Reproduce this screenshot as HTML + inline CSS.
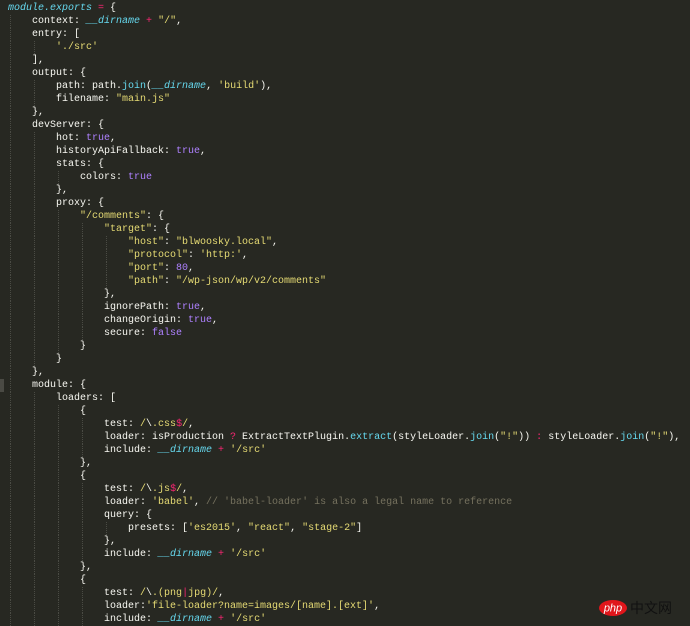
<!DOCTYPE html>
<html><head><meta charset="utf-8"><style>
html,body{margin:0;padding:0;background:#272822;width:690px;height:621px;overflow:hidden}
#c{position:absolute;left:8px;top:2px;font-family:"Liberation Mono",monospace;font-size:10px;line-height:13px;color:#f8f8f2}
.l{height:13px;white-space:pre}
.g{display:inline-block;width:24px;height:13px;vertical-align:top;background:repeating-linear-gradient(#4a4b44 0 1px,transparent 1px 2px) no-repeat 2px 0/1px 100%}
.s{color:#e6db74}.c{color:#66d9ef}.i{color:#66d9ef;font-style:italic}.p{color:#f92672}.n{color:#ae81ff}.m{color:#75715e}
#hl{position:absolute;left:0;top:379px;width:4px;height:13px;background:#4a4a44}
#logo{position:absolute;left:599px;top:598px}
</style></head><body>
<div id="hl"></div>
<div id="c"><div class="l"><span class="i">module.exports</span> <span class="p">=</span> {</div><div class="l"><span class="g"></span>context: <span class="i">__dirname</span> <span class="p">+</span> <span class="s">"/"</span>,</div><div class="l"><span class="g"></span>entry: [</div><div class="l"><span class="g"></span><span class="g"></span><span class="s">'./src'</span></div><div class="l"><span class="g"></span>],</div><div class="l"><span class="g"></span>output: {</div><div class="l"><span class="g"></span><span class="g"></span>path: path.<span class="c">join</span>(<span class="i">__dirname</span>, <span class="s">'build'</span>),</div><div class="l"><span class="g"></span><span class="g"></span>filename: <span class="s">"main.js"</span></div><div class="l"><span class="g"></span>},</div><div class="l"><span class="g"></span>devServer: {</div><div class="l"><span class="g"></span><span class="g"></span>hot: <span class="n">true</span>,</div><div class="l"><span class="g"></span><span class="g"></span>historyApiFallback: <span class="n">true</span>,</div><div class="l"><span class="g"></span><span class="g"></span>stats: {</div><div class="l"><span class="g"></span><span class="g"></span><span class="g"></span>colors: <span class="n">true</span></div><div class="l"><span class="g"></span><span class="g"></span>},</div><div class="l"><span class="g"></span><span class="g"></span>proxy: {</div><div class="l"><span class="g"></span><span class="g"></span><span class="g"></span><span class="s">"/comments"</span>: {</div><div class="l"><span class="g"></span><span class="g"></span><span class="g"></span><span class="g"></span><span class="s">"target"</span>: {</div><div class="l"><span class="g"></span><span class="g"></span><span class="g"></span><span class="g"></span><span class="g"></span><span class="s">"host"</span>: <span class="s">"blwoosky.local"</span>,</div><div class="l"><span class="g"></span><span class="g"></span><span class="g"></span><span class="g"></span><span class="g"></span><span class="s">"protocol"</span>: <span class="s">'http:'</span>,</div><div class="l"><span class="g"></span><span class="g"></span><span class="g"></span><span class="g"></span><span class="g"></span><span class="s">"port"</span>: <span class="n">80</span>,</div><div class="l"><span class="g"></span><span class="g"></span><span class="g"></span><span class="g"></span><span class="g"></span><span class="s">"path"</span>: <span class="s">"/wp-json/wp/v2/comments"</span></div><div class="l"><span class="g"></span><span class="g"></span><span class="g"></span><span class="g"></span>},</div><div class="l"><span class="g"></span><span class="g"></span><span class="g"></span><span class="g"></span>ignorePath: <span class="n">true</span>,</div><div class="l"><span class="g"></span><span class="g"></span><span class="g"></span><span class="g"></span>changeOrigin: <span class="n">true</span>,</div><div class="l"><span class="g"></span><span class="g"></span><span class="g"></span><span class="g"></span>secure: <span class="n">false</span></div><div class="l"><span class="g"></span><span class="g"></span><span class="g"></span>}</div><div class="l"><span class="g"></span><span class="g"></span>}</div><div class="l"><span class="g"></span>},</div><div class="l"><span class="g"></span>module: {</div><div class="l"><span class="g"></span><span class="g"></span>loaders: [</div><div class="l"><span class="g"></span><span class="g"></span><span class="g"></span>{</div><div class="l"><span class="g"></span><span class="g"></span><span class="g"></span><span class="g"></span>test: <span class="s">/</span>\<span class="s">.css</span><span class="p">$</span><span class="s">/</span>,</div><div class="l"><span class="g"></span><span class="g"></span><span class="g"></span><span class="g"></span>loader: isProduction <span class="p">?</span> ExtractTextPlugin.<span class="c">extract</span>(styleLoader.<span class="c">join</span>(<span class="s">"!"</span>)) <span class="p">:</span> styleLoader.<span class="c">join</span>(<span class="s">"!"</span>),</div><div class="l"><span class="g"></span><span class="g"></span><span class="g"></span><span class="g"></span>include: <span class="i">__dirname</span> <span class="p">+</span> <span class="s">'/src'</span></div><div class="l"><span class="g"></span><span class="g"></span><span class="g"></span>},</div><div class="l"><span class="g"></span><span class="g"></span><span class="g"></span>{</div><div class="l"><span class="g"></span><span class="g"></span><span class="g"></span><span class="g"></span>test: <span class="s">/</span>\<span class="s">.js</span><span class="p">$</span><span class="s">/</span>,</div><div class="l"><span class="g"></span><span class="g"></span><span class="g"></span><span class="g"></span>loader: <span class="s">'babel'</span>, <span class="m">// 'babel-loader' is also a legal name to reference</span></div><div class="l"><span class="g"></span><span class="g"></span><span class="g"></span><span class="g"></span>query: {</div><div class="l"><span class="g"></span><span class="g"></span><span class="g"></span><span class="g"></span><span class="g"></span>presets: [<span class="s">'es2015'</span>, <span class="s">"react"</span>, <span class="s">"stage-2"</span>]</div><div class="l"><span class="g"></span><span class="g"></span><span class="g"></span><span class="g"></span>},</div><div class="l"><span class="g"></span><span class="g"></span><span class="g"></span><span class="g"></span>include: <span class="i">__dirname</span> <span class="p">+</span> <span class="s">'/src'</span></div><div class="l"><span class="g"></span><span class="g"></span><span class="g"></span>},</div><div class="l"><span class="g"></span><span class="g"></span><span class="g"></span>{</div><div class="l"><span class="g"></span><span class="g"></span><span class="g"></span><span class="g"></span>test: <span class="s">/</span>\<span class="s">.(png</span><span class="p">|</span><span class="s">jpg)/</span>,</div><div class="l"><span class="g"></span><span class="g"></span><span class="g"></span><span class="g"></span>loader:<span class="s">'file-loader?name=images/[name].[ext]'</span>,</div><div class="l"><span class="g"></span><span class="g"></span><span class="g"></span><span class="g"></span>include: <span class="i">__dirname</span> <span class="p">+</span> <span class="s">'/src'</span></div></div>
<div id="logo"><svg width="86" height="20"><ellipse cx="14" cy="10" rx="14" ry="8" fill="#e0161b"/><text x="14" y="13.5" text-anchor="middle" font-family="Liberation Sans,sans-serif" font-style="italic" font-size="11" fill="#fff">php</text><text x="31" y="15" font-family="Noto Sans CJK SC,sans-serif" font-size="14" fill="#111">中文网</text></svg></div>
</body></html>
